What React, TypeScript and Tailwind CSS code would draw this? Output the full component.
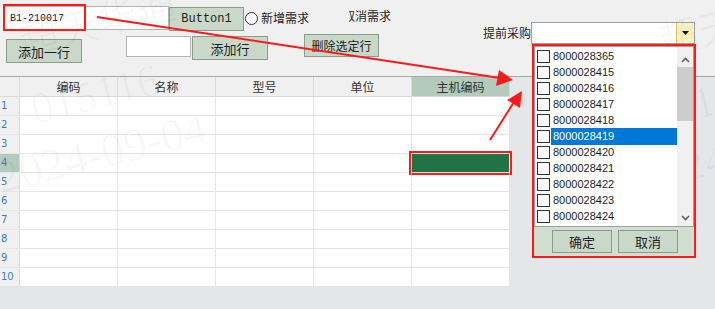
import type { ReactNode } from "react"
import clsx from "clsx"

const items = [
  "8000028365",
  "8000028415",
  "8000028416",
  "8000028417",
  "8000028418",
  "8000028419",
  "8000028420",
  "8000028421",
  "8000028422",
  "8000028423",
  "8000028424",
]

const columns = ["编码", "名称", "型号", "单位", "主机编码"]

function Btn({ label, className }: { label: string; className?: string }): ReactNode {
  return (
    <button
      className={clsx(
        "flex shrink-0 items-center justify-center border border-[#8d9a8d] bg-[#c9d8c9] text-[12px] leading-none text-[#1e1e1e]",
        className,
      )}
    >
      {label}
    </button>
  )
}

function Watermark({ left }: { left: number }): ReactNode {
  return (
    <div className="pointer-events-none absolute top-0 h-[309px] w-[260px]" style={{ left }}>
      <span className="absolute left-[18px] top-[-6px] -rotate-[14deg] text-[40px] font-['Liberation_Serif','Noto_Sans_CJK_SC',serif] text-black/[0.03]">
        超天华通
      </span>
      <span className="absolute left-[30px] top-[62px] -rotate-[14deg] text-[44px] font-['Liberation_Serif',serif] text-black/[0.03]">
        015116
      </span>
      <span className="absolute left-[-6px] top-[118px] -rotate-[14deg] text-[46px] font-['Liberation_Serif',serif] text-black/[0.03]">
        2024-09-04
      </span>
    </div>
  )
}

export default function App(): ReactNode {
  return (
    <div className="relative h-[309px] w-[715px] overflow-hidden bg-[#e5e6e8] font-['Noto_Sans_CJK_SC',sans-serif] text-[12px] text-[#1e1e1e]">
      {/* toolbar */}
      <div className="h-[77px] border-b border-[#a8a8a8] bg-[#f0f0f0]">
        <div className="flex h-[33px] items-start pl-[4px] pt-[6px]">
          <div className="flex h-[24px] w-[165px] items-center border border-[#b4b4b4] bg-white pl-[5px] font-['Liberation_Mono',monospace] text-[10px]">
            B1-210017
          </div>
          <Btn label="Button1" className="mt-[1px] h-[24px] w-[75px] font-['Liberation_Mono',monospace] text-[10px]" />
          <div className="ml-[1px] mt-[6px] h-[13px] w-[13px] rounded-full border border-[#333] bg-white" />
          <span className="ml-[3px] mt-[3px] leading-[18px]">新增需求</span>
          <div className="ml-[40px] mt-[2px] w-[42px] overflow-hidden leading-[16px]">
            <span className="-ml-[6px] whitespace-nowrap">取消需求</span>
          </div>
        </div>
        <div className="flex items-start pl-[6px]">
          <Btn label="添加一行" className="mt-[6px] h-[24px] w-[76px] text-[13px]" />
          <div className="ml-[44px] mt-[3px] h-[21px] w-[65px] border border-[#b4b4b4] bg-white" />
          <Btn label="添加行" className="ml-[1px] mt-[3px] h-[24px] w-[76px] text-[13px]" />
          <Btn label="删除选定行" className="ml-[36px] mt-[1px] h-[23px] w-[75px]" />
          <div className="ml-[104px] mt-[-11px] flex h-[22px] items-center">
            <span className="w-[48px] whitespace-nowrap">提前采购</span>
            <div className="flex h-[22px] w-[164px] border border-[#9aa49e] bg-white">
              <div className="flex-1" />
              <div className="flex w-[18px] items-center justify-center border-l border-[#e3c25a] bg-[#fdf0c2]">
                <svg width="7" height="4" viewBox="0 0 7 4">
                  <path d="M0 0h7L3.5 4z" fill="#111" />
                </svg>
              </div>
            </div>
          </div>
        </div>
      </div>

      {/* grid */}
      <div className="w-[510px]">
        <div className="flex h-[20px] border-b border-[#dadada] bg-[#f0f0f0]">
          <div className="w-[20px] border-r border-[#dadada]" />
          {columns.map((c, i) => (
            <div
              key={c}
              className={clsx(
                "flex w-[98px] items-center justify-center border-r border-[#dadada] text-[#333]",
                i === 4 && "bg-[#b4cbbb]",
              )}
            >
              {c}
            </div>
          ))}
        </div>
        {Array.from({ length: 10 }, (_, r) => (
          <div key={r} className="flex h-[19px] border-b border-[#e6e6e6] bg-white">
            <div
              className={clsx(
                "w-[20px] border-r border-[#dadada] pl-[1px] font-['DejaVu_Sans',sans-serif] text-[10px] leading-[18px] text-[#3d7cc0]",
                r === 3 ? "bg-[#b4cbbb]" : "bg-[#f0f0f0]",
              )}
            >
              {r + 1}
            </div>
            {columns.map((c, i) => (
              <div key={c} className="w-[98px] border-r border-[#e6e6e6]">
                {r === 3 && i === 4 && (
                  <div className="h-full w-full bg-[#217346] outline-2 outline-offset-1 outline-[#ff1a1a]" />
                )}
              </div>
            ))}
          </div>
        ))}
      </div>

      <Watermark left={0} />
      <Watermark left={640} />

      {/* dropdown */}
      <div className="absolute left-[532px] top-[44px] flex h-[214px] w-[164px] flex-col border-2 border-[#ff1a1a] bg-[#d0dfd0]">
        <div className="flex h-[181px] border border-[#a0a0a0] bg-white">
          <div className="flex-1 pl-[2px] pt-[1px] font-['Liberation_Sans',sans-serif] text-[11px]">
            {items.map((it) => (
              <div key={it} className="flex h-[16px] items-center">
                <div className="h-[13px] w-[13px] shrink-0 border border-[#333] bg-white" />
                <span
                  className={clsx(
                    "ml-[1px] flex h-[17px] flex-1 items-center pl-[2px]",
                    it === "8000028419" && "bg-[#0078d7] text-white",
                  )}
                >
                  {it}
                </span>
              </div>
            ))}
          </div>
          <div className="flex w-[16px] flex-col items-center bg-[#f0f0f0]">
            <svg className="mt-[10px]" width="9" height="6" viewBox="0 0 9 6">
              <path d="M1 5l3.5-3.5L8 5" stroke="#606060" strokeWidth="1.6" fill="none" />
            </svg>
            <div className="mt-[4px] h-[54px] w-full bg-[#cdcdcd]" />
            <div className="flex-1" />
            <svg className="mb-[5px]" width="9" height="6" viewBox="0 0 9 6">
              <path d="M1 1l3.5 3.5L8 1" stroke="#606060" strokeWidth="1.6" fill="none" />
            </svg>
          </div>
        </div>
        <div className="flex flex-1 items-start gap-[6px] pl-[18px] pt-[3px]">
          <Btn label="确定" className="h-[23px] w-[60px] text-[13px]" />
          <Btn label="取消" className="h-[23px] w-[60px] text-[13px]" />
        </div>
      </div>

      {/* annotation */}
      <div className="absolute left-[3px] top-[4px] h-[27px] w-[83px] border-2 border-[#ff1a1a]" />
      <svg className="pointer-events-none absolute left-0 top-0" width="715" height="309" viewBox="0 0 715 309">
        <line x1="97" y1="17" x2="500" y2="78" stroke="#ff1a1a" strokeWidth="2" />
        <path d="M513 80L496 86L499 70Z" fill="#ff1a1a" />
        <line x1="490" y1="140" x2="514" y2="102" stroke="#ff1a1a" strokeWidth="2" />
        <path d="M522 91L520 108L507 100Z" fill="#ff1a1a" />
      </svg>
    </div>
  )
}
